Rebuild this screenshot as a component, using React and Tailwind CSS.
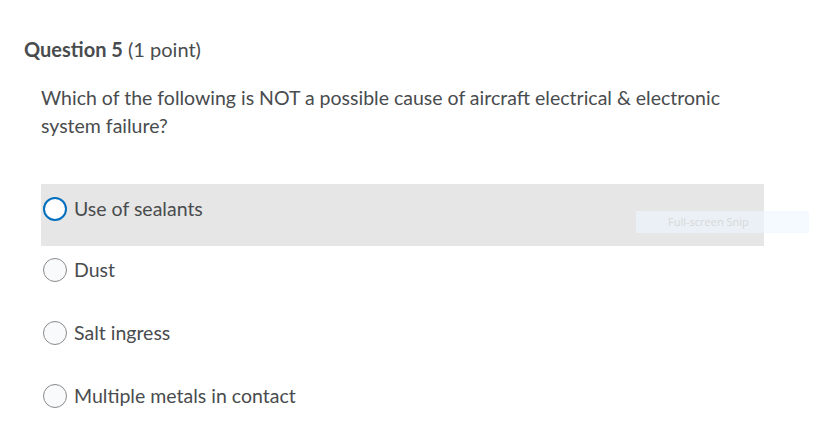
import React from "react";

const Radio = ({ active }) => (
  <span
    className={
      active
        ? "inline-block w-[24px] h-[24px] rounded-full border-[2.5px] border-[#006fbf] bg-white shrink-0"
        : "inline-block w-[24px] h-[24px] rounded-full border border-[#8a8a8a] bg-[#f9fafb] shrink-0"
    }
  />
);

export default function App() {
  const options = ["Dust", "Salt ingress", "Multiple metals in contact"];
  return (
    <div
      className="relative w-[832px] h-[445px] bg-white text-[#494c4e]"
      style={{ fontFamily: "Lato, 'Noto Sans', sans-serif" }}
    >
      <div className="pt-[36px] pl-[24px]">
        <div className="text-[20px] leading-[26px]">
          <span className="font-bold">Question 5</span> (1 point)
        </div>
      </div>
      <div className="pl-[41px] pt-[22px] pr-[90px] text-[19.5px] leading-[28px]">
        Which of the following is NOT a possible cause of aircraft electrical &amp; electronic system failure?
      </div>
      <div className="ml-[41px] mt-[44px] w-[723px]">
        <div className="h-[62px] bg-[#e6e6e6] flex items-start pt-[13px] pl-[2px] gap-[7px]">
          <Radio active />
          <span className="text-[19.5px] leading-[24px]">Use of sealants</span>
        </div>
        {options.map((o) => (
          <div key={o} className="h-[63px] flex items-start pt-[12px] pl-[2px] gap-[7px]">
            <Radio />
            <span className="text-[19.5px] leading-[24px]">{o}</span>
          </div>
        ))}
      </div>
      <div className="absolute left-[636px] top-[211px] w-[173px] h-[22px] bg-[rgba(236,246,255,0.6)] flex items-center pl-[32px] text-[11px] text-[#d8d8d8]"
        style={{ fontFamily: "'Open Sans', 'Noto Sans', sans-serif" }}>
        Full-screen Snip
      </div>
    </div>
  );
}
